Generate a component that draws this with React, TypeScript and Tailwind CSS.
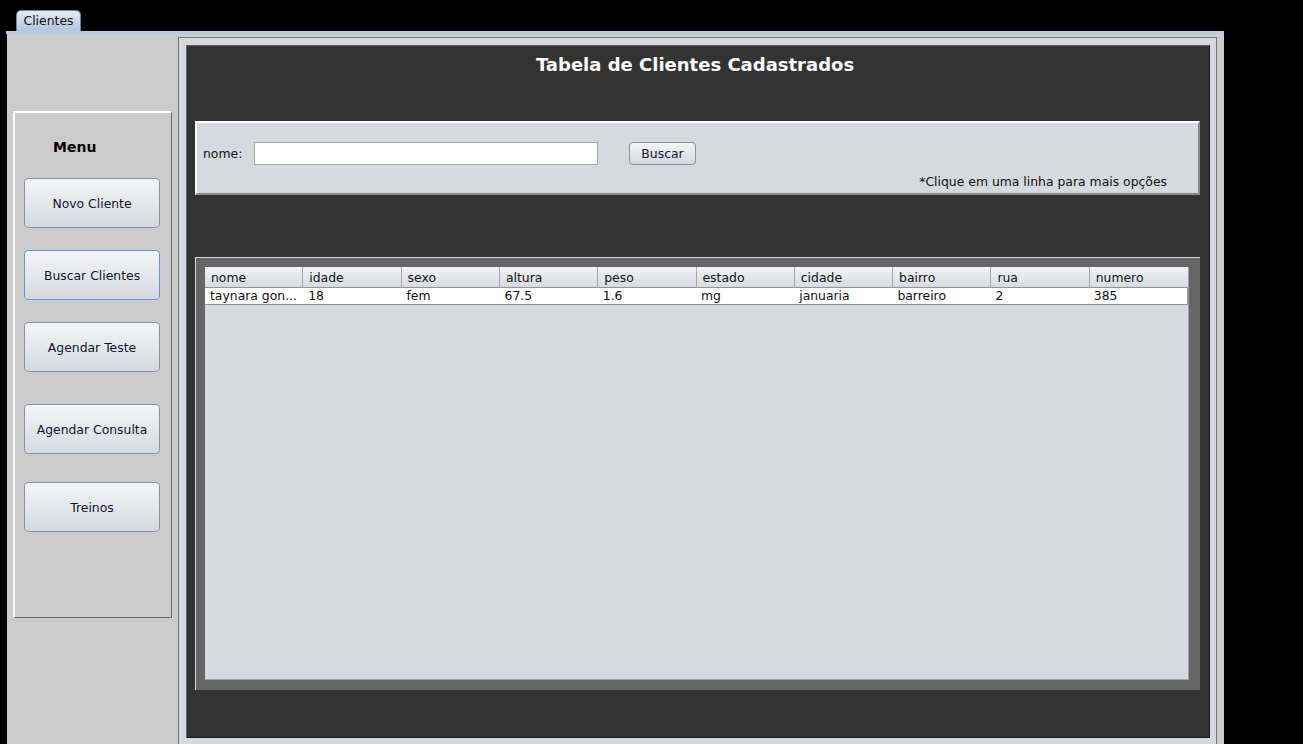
import React from "react";

const menuItems = [
  { label: "Novo Cliente", mt: "mt-[22px]", focused: false },
  { label: "Buscar Clientes", mt: "mt-[22px]", focused: true },
  { label: "Agendar Teste", mt: "mt-[22px]", focused: false },
  { label: "Agendar Consulta", mt: "mt-[32px]", focused: false },
  { label: "Treinos", mt: "mt-[28px]", focused: false },
];

const columns = ["nome", "idade", "sexo", "altura", "peso", "estado", "cidade", "bairro", "rua", "numero"];

const rows = [
  ["taynara gon...", "18", "fem", "67.5", "1.6", "mg", "januaria", "barreiro", "2", "385"],
];

const MenuButton = ({ label, focused }: { label: string; focused: boolean }) => (
  <button
    className={
      "w-[136px] h-[50px] pt-[2px] rounded-[4px] border bg-gradient-to-b from-[#f4f5f8] to-[#d5d9e1] text-[12.4px] text-[#14142a] " +
      (focused ? "border-[#6f93c2] shadow-[0_0_0_1px_#bfd0e6]" : "border-[#8d929a]")
    }
  >
    {label}
  </button>
);

export default function App() {
  return (
    <div className="w-[1303px] h-[744px] bg-black overflow-hidden font-['DejaVu_Sans',sans-serif]">
      {/* aba */}
      <div className="h-[31px] pl-[16px] pt-[10px] flex">
        <div className="w-[65px] h-[21px] rounded-t-[5px] border border-b-0 border-[#6f8298] bg-gradient-to-b from-[#e3ebf4] to-[#b3c6db] text-[12.4px] text-[#111] flex items-center justify-center">
          Clientes
        </div>
      </div>

      <div className="ml-[6px] w-[1218px] h-[713px] border-t-[3px] border-[#b9cbe0] flex">
        <div className="ml-[1px] flex-1 bg-[#cccccc] flex overflow-hidden">
          {/* menu lateral */}
          <div className="w-[171px] pl-[6px] pt-[77px]">
            <div className="w-[159px] h-[507px] border-t-2 border-l-2 border-t-white border-l-white border-r border-b border-r-[#6a6a6a] border-b-[#6a6a6a] pl-[9px] pt-[26px] flex flex-col">
              <div className="pl-[29px] text-[14px] font-bold leading-[17px] text-black">Menu</div>
              {menuItems.map((m) => (
                <div key={m.label} className={m.mt}>
                  <MenuButton label={m.label} focused={m.focused} />
                </div>
              ))}
            </div>
          </div>

          {/* painel principal */}
          <div className="mt-[3px] w-[1039px] h-[720px] border border-[#777] bg-[#d6d9df] pl-[7px] pr-[6px] pt-[7px]">
            <div className="w-[1024px] h-[693px] bg-[#333333] border border-t-[#666] border-l-[#666] border-r-[#1c1c1c] border-b-[#1c1c1c]">
              <div className="h-[75px] pt-[8px] pr-[6px] text-center text-white font-bold text-[18px] leading-[22px]">
                Tabela de Clientes Cadastrados
              </div>

              {/* busca */}
              <div className="ml-[8px] w-[1005px] h-[74px] bg-[#d6d9df] border-2 border-t-white border-l-white border-r-[#8a8a8a] border-b-[#8a8a8a] pt-[19px] text-[12.4px] text-[#111]">
                <div className="flex items-center h-[23px] pl-[6px]">
                  <span className="w-[51px] pt-[1px]">nome:</span>
                  <div className="w-[344px] h-[23px] bg-white border border-[#a6a6a6]" />
                  <button className="ml-[31px] w-[67px] h-[23px] pt-[1px] rounded-[4px] border border-[#8d929a] bg-gradient-to-b from-[#f4f5f8] to-[#d5d9e1] text-[12.4px] text-[#14142a]">
                    Buscar
                  </button>
                </div>
                <div className="mt-[9px] flex justify-end pr-[31px] leading-[16px]">
                  *Clique em uma linha para mais opções
                </div>
              </div>

              {/* tabela */}
              <div className="mt-[62px] ml-[8px] w-[1005px] h-[433px] bg-[#666666] border-t border-l border-[#d6d9df] pt-[9px] pl-[9px] pr-[11px] pb-[10px]">
                <div className="w-[984px] h-[413px] bg-[#d6d9df] border-r border-b border-[#9a9ea6] text-[12.4px]">
                  <div className="grid grid-cols-10 h-[21px] bg-gradient-to-b from-[#f2f3f6] to-[#d8dbe1] border-b border-[#8f949c]">
                    {columns.map((c, i) => (
                      <div
                        key={c}
                        className={"pl-[6px] pt-[2px] flex items-center text-[#111] " + (i < columns.length - 1 ? "border-r border-[#a3a7ae]" : "")}
                      >
                        {c}
                      </div>
                    ))}
                  </div>
                  {rows.map((r, idx) => (
                    <div key={idx} className="grid grid-cols-10 h-[17px] bg-white border-b border-r border-[#8f949c]">
                      {r.map((v, j) => (
                        <div key={j} className="pl-[5px] leading-[16px] text-[#111] whitespace-nowrap">
                          {v}
                        </div>
                      ))}
                    </div>
                  ))}
                </div>
              </div>
            </div>
          </div>
        </div>
      </div>
    </div>
  );
}
